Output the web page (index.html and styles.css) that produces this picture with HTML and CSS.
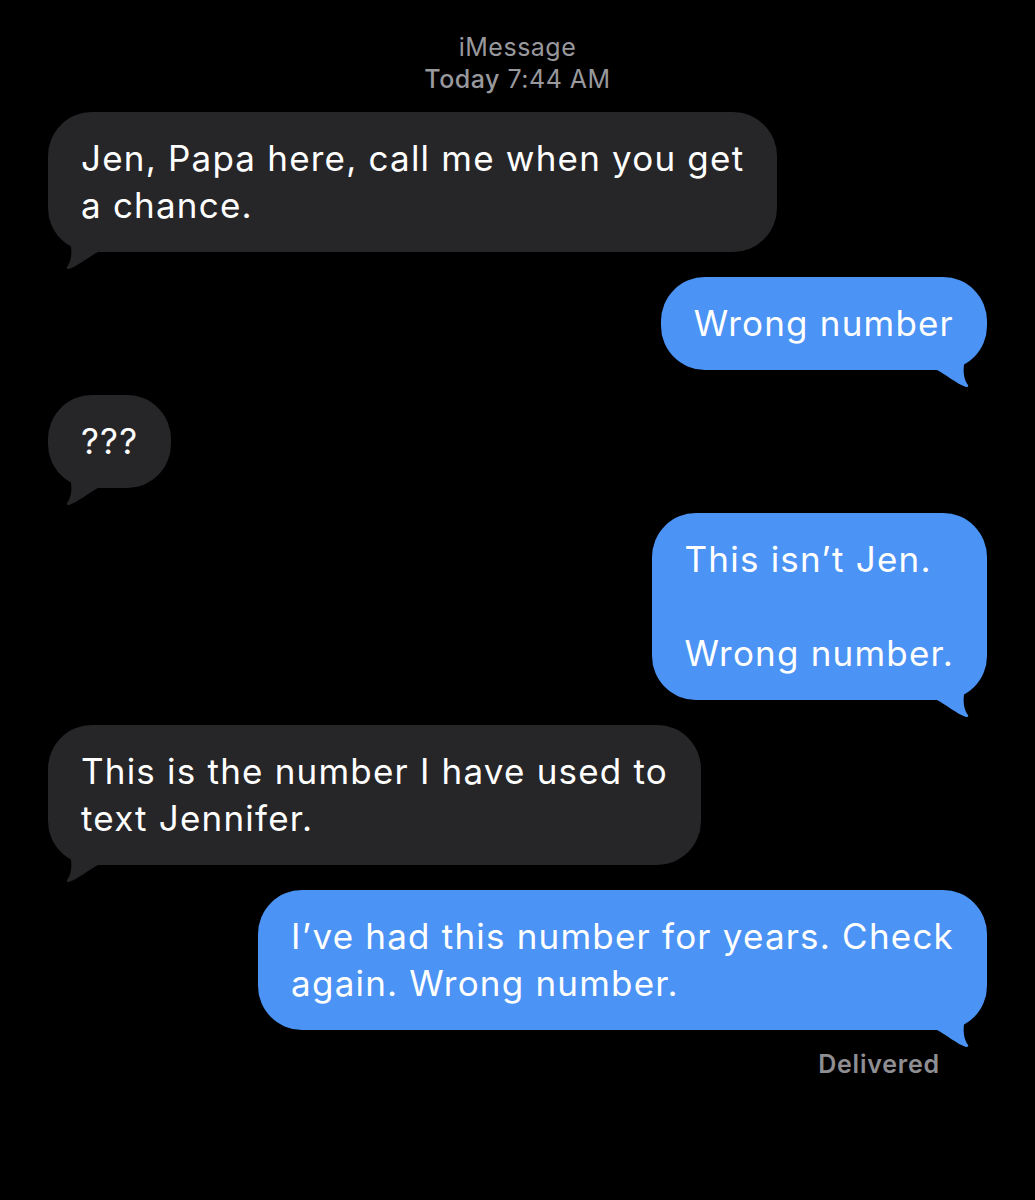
FILE: index.html
```html
<!DOCTYPE html>
<html>
<head>
    <meta charset="UTF-8">
    <title>iMessage</title>
    <link rel="stylesheet" href="styles.css">
</head>
<body>
    <div class="thread">
        <div class="meta">
            <div>iMessage</div>
            <div><b>Today</b> 7:44 AM</div>
        </div>

        <!-- received -->
        <div class="msg in">
            <div class="bubble">Jen, Papa here, call me when you get<br>a chance.
                <svg class="tail" viewBox="0 0 56 40"><path d="M6 10 L30 0 L33 15 C32 22 33 30 37 35 Q38 37 35 37 C26 34 14 24 6 20 Z"/></svg>
            </div>
        </div>

        <div class="msg out">
            <div class="bubble">Wrong number
                <svg class="tail" viewBox="0 0 56 40"><path d="M6 10 L30 0 L33 15 C32 22 33 30 37 35 Q38 37 35 37 C26 34 14 24 6 20 Z"/></svg>
            </div>
        </div>

        <div class="msg in">
            <div class="bubble">???
                <svg class="tail" viewBox="0 0 56 40"><path d="M6 10 L30 0 L33 15 C32 22 33 30 37 35 Q38 37 35 37 C26 34 14 24 6 20 Z"/></svg>
            </div>
        </div>

        <div class="msg out">
            <div class="bubble">This isn’t Jen.<br><br>Wrong number.
                <svg class="tail" viewBox="0 0 56 40"><path d="M6 10 L30 0 L33 15 C32 22 33 30 37 35 Q38 37 35 37 C26 34 14 24 6 20 Z"/></svg>
            </div>
        </div>

        <div class="msg in">
            <div class="bubble">This is the number I have used to<br>text Jennifer.
                <svg class="tail" viewBox="0 0 56 40"><path d="M6 10 L30 0 L33 15 C32 22 33 30 37 35 Q38 37 35 37 C26 34 14 24 6 20 Z"/></svg>
            </div>
        </div>

        <div class="msg out">
            <div class="bubble">I’ve had this number for years. Check<br>again. Wrong number.
                <svg class="tail" viewBox="0 0 56 40"><path d="M6 10 L30 0 L33 15 C32 22 33 30 37 35 Q38 37 35 37 C26 34 14 24 6 20 Z"/></svg>
            </div>
        </div>

        <div class="status">Delivered</div>
    </div>
</body>
</html>
```

FILE: styles.css
```css
body {
    margin: 0;
    background: #000;
    color: #fff;
    font-family: Inter, "Noto Sans", sans-serif;
}
.thread {
    display: flex;
    flex-direction: column;
    padding: 31px 48px 40px;
}
.meta {
    text-align: center;
    color: #98989d;
    font-size: 25px;
    line-height: 32px;
    letter-spacing: 0.5px;
    margin-bottom: 17px;
}
.meta b {
    font-weight: 500;
}
.msg {
    display: flex;
    margin-bottom: 25px;
}
.msg.out {
    justify-content: flex-end;
}
.bubble {
    position: relative;
    padding: 23px 33px;
    border-radius: 44px;
    font-size: 35px;
    line-height: 47px;
    letter-spacing: 1.2px;
    white-space: nowrap;
}
.in .bubble {
    background: #262629;
}
.out .bubble {
    background: #4b93f4;
}
.tail {
    position: absolute;
    bottom: -20px;
    width: 56px;
    height: 40px;
}
.out .tail {
    right: 0;
    fill: #4b93f4;
}
.in .tail {
    left: 0;
    fill: #262629;
    transform: scaleX(-1);
}
.status {
    align-self: flex-end;
    margin: -7px 47px 0 0;
    color: #8e8e93;
    font-size: 25px;
    font-weight: 600;
    line-height: 32px;
    letter-spacing: 0.8px;
}
```
